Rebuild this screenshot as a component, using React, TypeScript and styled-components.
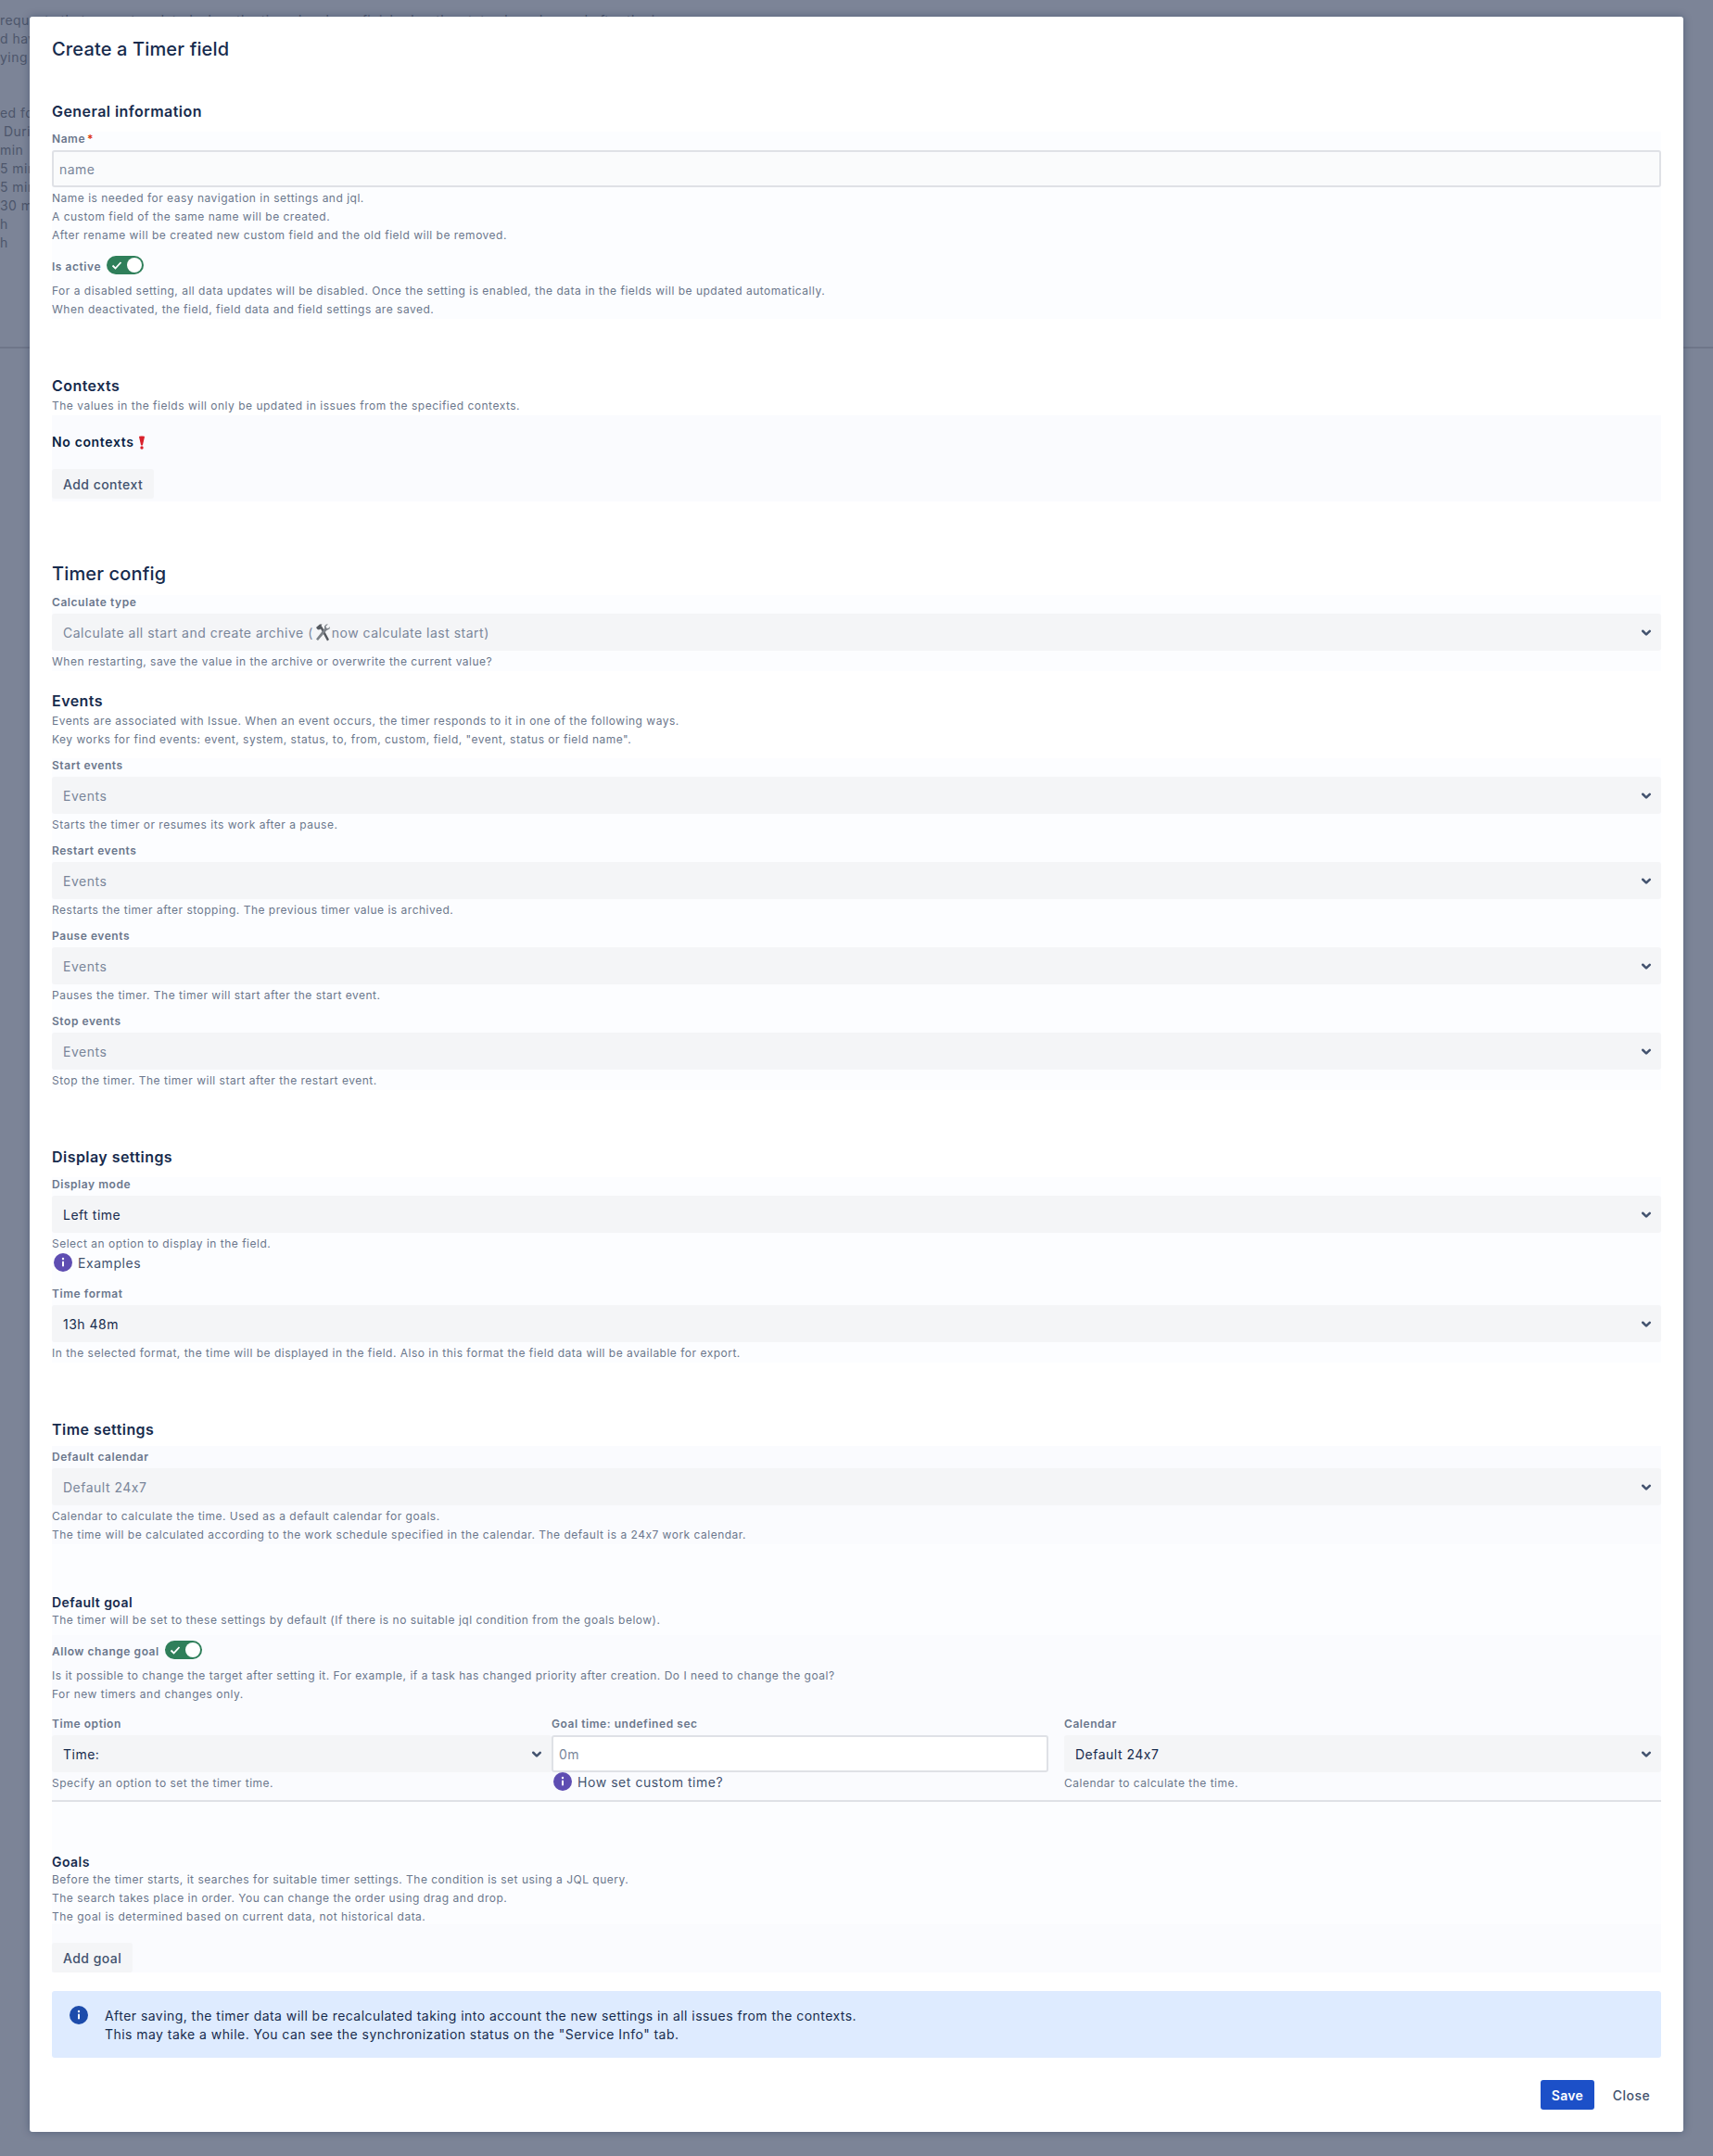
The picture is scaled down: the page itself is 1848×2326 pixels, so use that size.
import React from 'react';
import styled, { createGlobalStyle } from 'styled-components';

const GlobalStyle = createGlobalStyle`
  html, body {
    margin: 0;
    padding: 0;
    background: #7c8497;
  }
  body {
    font-family: Inter, "Noto Sans", "Liberation Sans", sans-serif;
    font-size: 14px;
    letter-spacing: 0.45px;
    font-feature-settings: "calt" 0;
    color: #172b4d;
  }
`;

const Screen = styled.div`
  position: relative;
  height: 2326px;
  overflow: hidden;
  background: #7c8497;
  padding: 18px 32px 0;
  box-sizing: border-box;
`;

const BackPage = styled.div`
  position: absolute;
  inset: 12px 0 auto 0;
  color: #4d566b;
  font-size: 14px;
  line-height: 20px;
  white-space: pre;
`;

const BackLine = styled.div<{ $indent?: number; $mt?: number }>`
  height: 20px;
  padding-left: ${(p) => p.$indent ?? 0}px;
  margin-top: ${(p) => p.$mt ?? 0}px;
`;

const BackRule = styled.div`
  height: 2px;
  margin-top: 102px;
  background: #6f7689;
`;

const Modal = styled.div`
  position: relative;
  height: 2282px;
  background: #fff;
  border-radius: 3px;
  box-shadow: 0 0 8px rgba(9, 30, 66, 0.35);
  padding: 23px 24px 0;
  box-sizing: border-box;
`;

const Title = styled.h1`
  margin: 0;
  font-size: 20px;
  line-height: 24px;
  font-weight: 500;
  letter-spacing: 0.15px;
  color: #172b4d;
`;

const Heading = styled.h2<{ $mt?: number; $size?: number }>`
  margin: ${(p) => p.$mt ?? 0}px 0 0;
  font-size: ${(p) => p.$size ?? 16}px;
  line-height: ${(p) => (p.$size === 20 ? 24 : 20)}px;
  font-weight: ${(p) => (p.$size === 20 ? 500 : 600)};
  letter-spacing: ${(p) => (p.$size === 20 ? 0.15 : 0.45)}px;
  color: #172b4d;
`;

const Tinted = styled.div<{ $mt?: number; $strong?: boolean; $pb?: number; $pt?: number }>`
  margin-top: ${(p) => p.$mt ?? 0}px;
  padding-top: ${(p) => p.$pt ?? 0}px;
  padding-bottom: ${(p) => p.$pb ?? 0}px;
  background: ${(p) => (p.$strong ? '#fafbfe' : '#fcfdff')};
`;

const Label = styled.label<{ $mt?: number }>`
  display: block;
  margin-top: ${(p) => p.$mt ?? 0}px;
  margin-bottom: 4px;
  font-size: 12px;
  line-height: 16px;
  font-weight: 600;
  letter-spacing: 0.55px;
  color: #6b778c;
`;

const Required = styled.span`
  color: #de350b;
  margin-left: 2px;
`;

const Helper = styled.div<{ $mt?: number }>`
  margin-top: ${(p) => p.$mt ?? 2}px;
  font-size: 12px;
  line-height: 20px;
  letter-spacing: 0.5px;
  color: #6b778c;
`;

const TextInput = styled.div<{ $bg?: string }>`
  display: flex;
  align-items: center;
  height: 40px;
  box-sizing: border-box;
  padding: 0 6px;
  background: ${(p) => p.$bg ?? '#fafbfc'};
  border: 2px solid #dfe1e6;
  border-radius: 3px;
  font-size: 14px;
  color: #7a869a;
`;

const SelectBox = styled.div<{ $muted?: boolean }>`
  display: flex;
  align-items: center;
  justify-content: space-between;
  height: 40px;
  box-sizing: border-box;
  padding: 0 1px 0 12px;
  background: #f4f5f7;
  border-radius: 3px;
  font-size: 14px;
  letter-spacing: 0.5px;
  color: ${(p) => (p.$muted ? '#7a869a' : '#172b4d')};
`;

const SelectValue = styled.span`
  display: inline-flex;
  align-items: center;
`;

const ToggleRow = styled.div<{ $mt?: number }>`
  display: flex;
  align-items: flex-start;
  gap: 6px;
  margin-top: ${(p) => p.$mt ?? 0}px;
  height: 20px;
`;

const ToggleLabel = styled.span`
  font-size: 12px;
  line-height: 16px;
  font-weight: 600;
  letter-spacing: 0.55px;
  color: #6b778c;
  margin-top: 4px;
`;

const ToggleTrack = styled.span`
  display: flex;
  align-items: center;
  justify-content: space-between;
  width: 40px;
  height: 20px;
  box-sizing: border-box;
  padding: 0 2px 0 5px;
  border-radius: 10px;
  background: #2f7f5a;
`;

const ToggleKnob = styled.span`
  width: 16px;
  height: 16px;
  border-radius: 50%;
  background: #fff;
`;

const NoContexts = styled.div`
  display: flex;
  align-items: center;
  gap: 4px;
  font-size: 14px;
  line-height: 20px;
  font-weight: 600;
  letter-spacing: 0.65px;
  color: #091e42;
`;

const GhostButton = styled.button<{ $mt?: number }>`
  display: block;
  height: 32px;
  margin-top: ${(p) => p.$mt ?? 0}px;
  padding: 0 12px;
  border: 0;
  border-radius: 3px;
  background: #f4f5f7;
  color: #42526e;
  font: 500 14px Inter, sans-serif;
  letter-spacing: 0.45px;
`;

const LinkRow = styled.div`
  display: flex;
  align-items: center;
  gap: 6px;
  height: 20px;
  padding-left: 2px;
  font-size: 14px;
  letter-spacing: 0.55px;
  color: #42526e;
`;

const GoalGrid = styled.div`
  display: grid;
  grid-template-columns: 539px 553px 644px;
  margin-top: 14px;
  padding-bottom: 8px;
  border-bottom: 2px solid #dfe1e6;
`;

const GoalCell = styled.div<{ $pr?: number }>`
  min-width: 0;
  padding-right: ${(p) => p.$pr ?? 0}px;
`;

const Banner = styled.div`
  display: flex;
  gap: 18px;
  margin-top: 20px;
  height: 72px;
  box-sizing: border-box;
  padding: 16px 19px;
  background: #deebff;
  border-radius: 3px;
  font-size: 14px;
  line-height: 20px;
  color: #172b4d;
`;

const BannerText = styled.div`
  padding-top: 1px;
`;

const Footer = styled.div`
  display: flex;
  justify-content: flex-end;
  gap: 8px;
  margin-top: 24px;
`;

const PrimaryButton = styled.button`
  height: 32px;
  width: 58px;
  border: 0;
  border-radius: 3px;
  background: #1c50c8;
  color: #fff;
  font: 600 14px Inter, sans-serif;
  letter-spacing: 0.3px;
`;

const SubtleButton = styled.button`
  height: 32px;
  width: 64px;
  border: 0;
  background: transparent;
  color: #42526e;
  font: 500 14px Inter, sans-serif;
  letter-spacing: 0.45px;
`;

const ToolIcon = styled.svg`
  margin: 0 1px;
`;

function Chevron(): React.ReactElement {
  return (
    <svg width="30" height="30" viewBox="0 0 24 24" aria-hidden="true">
      <path
        fill="#42526e"
        d="M8.292 10.293a1.009 1.009 0 000 1.419l2.939 2.965c.218.215.5.322.779.322s.556-.107.769-.322l2.93-2.955a1.01 1.01 0 000-1.419.987.987 0 00-1.406 0l-2.298 2.317-2.307-2.327a.99.99 0 00-1.406 0z"
      />
    </svg>
  );
}

function Info({ color }: { color: string }): React.ReactElement {
  return (
    <svg width="20" height="20" viewBox="0 0 20 20" aria-hidden="true">
      <circle cx="10" cy="10" r="10" fill={color} />
      <circle cx="10" cy="6" r="1.2" fill="#fff" />
      <rect x="9" y="8.6" width="2" height="6" rx="1" fill="#fff" />
    </svg>
  );
}

function Toggle(): React.ReactElement {
  return (
    <ToggleTrack>
      <svg width="12" height="12" viewBox="0 0 12 12" aria-hidden="true">
        <path d="M1.5 6.5 4.5 9.5 10.5 3" fill="none" stroke="#fff" strokeWidth="1.8" />
      </svg>
      <ToggleKnob />
    </ToggleTrack>
  );
}

function Select({
  children,
  muted,
}: {
  children: React.ReactNode;
  muted?: boolean;
}): React.ReactElement {
  return (
    <SelectBox $muted={muted}>
      <SelectValue>{children}</SelectValue>
      <Chevron />
    </SelectBox>
  );
}

function EventField({ label, helper }: { label: string; helper: string }): React.ReactElement {
  return (
    <>
      <Label $mt={10}>{label}</Label>
      <Select muted>Events</Select>
      <Helper>{helper}</Helper>
    </>
  );
}

function BackgroundPage(): React.ReactElement {
  return (
    <BackPage>
      <BackLine>requests that are not updated when the timer has been finished or the status has changed after the issue</BackLine>
      <BackLine>d have</BackLine>
      <BackLine>ying the</BackLine>
      <BackLine $mt={40}>ed for</BackLine>
      <BackLine $indent={4}>During</BackLine>
      <BackLine>min</BackLine>
      <BackLine>5 min</BackLine>
      <BackLine>5 min</BackLine>
      <BackLine>30 min</BackLine>
      <BackLine>h</BackLine>
      <BackLine>h</BackLine>
      <BackRule />
    </BackPage>
  );
}

export default function App(): React.ReactElement {
  return (
    <Screen>
      <GlobalStyle />
      <BackgroundPage />
      <Modal>
        <Title>Create a Timer field</Title>

        <Heading $mt={45}>General information</Heading>
        <Tinted $mt={12}>
          <Label>
            Name<Required>*</Required>
          </Label>
          <TextInput>name</TextInput>
          <Helper $mt={2}>
            Name is needed for easy navigation in settings and jql.
            <br />
            A custom field of the same name will be created.
            <br />
            After rename will be created new custom field and the old field will be removed.
          </Helper>
          <ToggleRow $mt={12}>
            <ToggleLabel>Is active</ToggleLabel>
            <Toggle />
          </ToggleRow>
          <Helper $mt={8}>
            For a disabled setting, all data updates will be disabled. Once the setting is enabled, the data in the fields will be updated automatically.
            <br />
            When deactivated, the field, field data and field settings are saved.
          </Helper>
        </Tinted>

        <Heading $mt={62}>Contexts</Heading>
        <Helper $mt={2}>The values in the fields will only be updated in issues from the specified contexts.</Helper>
        <Tinted $strong $pt={19} $pb={3}>
          <NoContexts>
            No contexts
            <svg width="8" height="15" viewBox="0 0 8 15" aria-hidden="true">
              <path d="M1 1.2C1 .4 7 .4 7 1.2L5 10c-.2.7-1.800.7-2 0z" fill="#d9202b" />
              <circle cx="4" cy="13" r="1.7" fill="#d9202b" />
            </svg>
          </NoContexts>
          <GhostButton $mt={19}>Add context</GhostButton>
        </Tinted>

        <Heading $mt={66} $size={20}>Timer config</Heading>
        <Tinted $mt={11}>
          <Label>Calculate type</Label>
          <Select muted>
            Calculate all start and create archive (
            <ToolIcon width="18" height="20" viewBox="0 0 18 20" aria-hidden="true">
              <path d="M2 5 6 1.500 8.500 1.500 7.500 3 9 5 16 18 14 19.500 7 6.500 5 7.500 3.500 7z" fill="#55595f" />
              <path d="M15 1.500 12.500 3.500 13 5.500 15 6 17 4 16.500 6.500 13.500 8 4 19 2 17.500 11 6 11 3.500 13 1.500z" fill="#7d8288" />
            </ToolIcon>
            now calculate last start)
          </Select>
          <Helper>When restarting, save the value in the archive or overwrite the current value?</Helper>
        </Tinted>

        <Heading $mt={22}>Events</Heading>
        <Helper $mt={2}>
          Events are associated with Issue. When an event occurs, the timer responds to it in one of the following ways.
          <br />
          Key works for find events: event, system, status, to, from, custom, field, "event, status or field name".
        </Helper>
        <Tinted>
          <EventField label="Start events" helper="Starts the timer or resumes its work after a pause." />
          <EventField label="Restart events" helper="Restarts the timer after stopping. The previous timer value is archived." />
          <EventField label="Pause events" helper="Pauses the timer. The timer will start after the start event." />
          <EventField label="Stop events" helper="Stop the timer. The timer will start after the restart event." />
        </Tinted>

        <Heading $mt={62}>Display settings</Heading>
        <Tinted $mt={12}>
          <Label>Display mode</Label>
          <Select>Left time</Select>
          <Helper>Select an option to display in the field.</Helper>
          <LinkRow>
            <Info color="#5e4db2" />
            Examples
          </LinkRow>
          <Label $mt={16}>Time format</Label>
          <Select>13h 48m</Select>
          <Helper>In the selected format, the time will be displayed in the field. Also in this format the field data will be available for export.</Helper>
        </Tinted>

        <Heading $mt={62}>Time settings</Heading>
        <Tinted $mt={8} $pb={0}>
          <Tinted $strong $pt={4}>
            <Label>Default calendar</Label>
            <Select muted>Default 24x7</Select>
            <Helper>
              Calendar to calculate the time. Used as a default calendar for goals.
              <br />
              The time will be calculated according to the work schedule specified in the calendar. The default is a 24x7 work calendar.
            </Helper>
          </Tinted>

          <Heading $mt={53} $size={14}>Default goal</Heading>
          <Helper $mt={-1}>The timer will be set to these settings by default (If there is no suitable jql condition from the goals below).</Helper>
          <Tinted $mt={6} $pt={6} $strong>
            <ToggleRow>
              <ToggleLabel>Allow change goal</ToggleLabel>
              <Toggle />
            </ToggleRow>
            <Helper $mt={8}>
              Is it possible to change the target after setting it. For example, if a task has changed priority after creation. Do I need to change the goal?
              <br />
              For new timers and changes only.
            </Helper>
            <GoalGrid>
              <GoalCell>
                <Label>Time option</Label>
                <Select>Time:</Select>
                <Helper>Specify an option to set the timer time.</Helper>
              </GoalCell>
              <GoalCell $pr={17}>
                <Label>Goal time: undefined sec</Label>
                <TextInput $bg="#fff">0m</TextInput>
                <LinkRow>
                  <Info color="#5e4db2" />
                  How set custom time?
                </LinkRow>
              </GoalCell>
              <GoalCell>
                <Label>Calendar</Label>
                <Select>Default 24x7</Select>
                <Helper>Calendar to calculate the time.</Helper>
              </GoalCell>
            </GoalGrid>
          </Tinted>

          <Heading $mt={55} $size={14}>Goals</Heading>
          <Helper $mt={-1}>
            Before the timer starts, it searches for suitable timer settings. The condition is set using a JQL query.
            <br />
            The search takes place in order. You can change the order using drag and drop.
            <br />
            The goal is determined based on current data, not historical data.
          </Helper>
          <Tinted $mt={-2} $strong $pt={20}>
            <GhostButton>Add goal</GhostButton>
          </Tinted>
        </Tinted>

        <Banner>
          <Info color="#1c4bab" />
          <BannerText>
            After saving, the timer data will be recalculated taking into account the new settings in all issues from the contexts.
            <br />
            This may take a while. You can see the synchronization status on the "Service Info" tab.
          </BannerText>
        </Banner>

        <Footer>
          <PrimaryButton>Save</PrimaryButton>
          <SubtleButton>Close</SubtleButton>
        </Footer>
      </Modal>
    </Screen>
  );
}
